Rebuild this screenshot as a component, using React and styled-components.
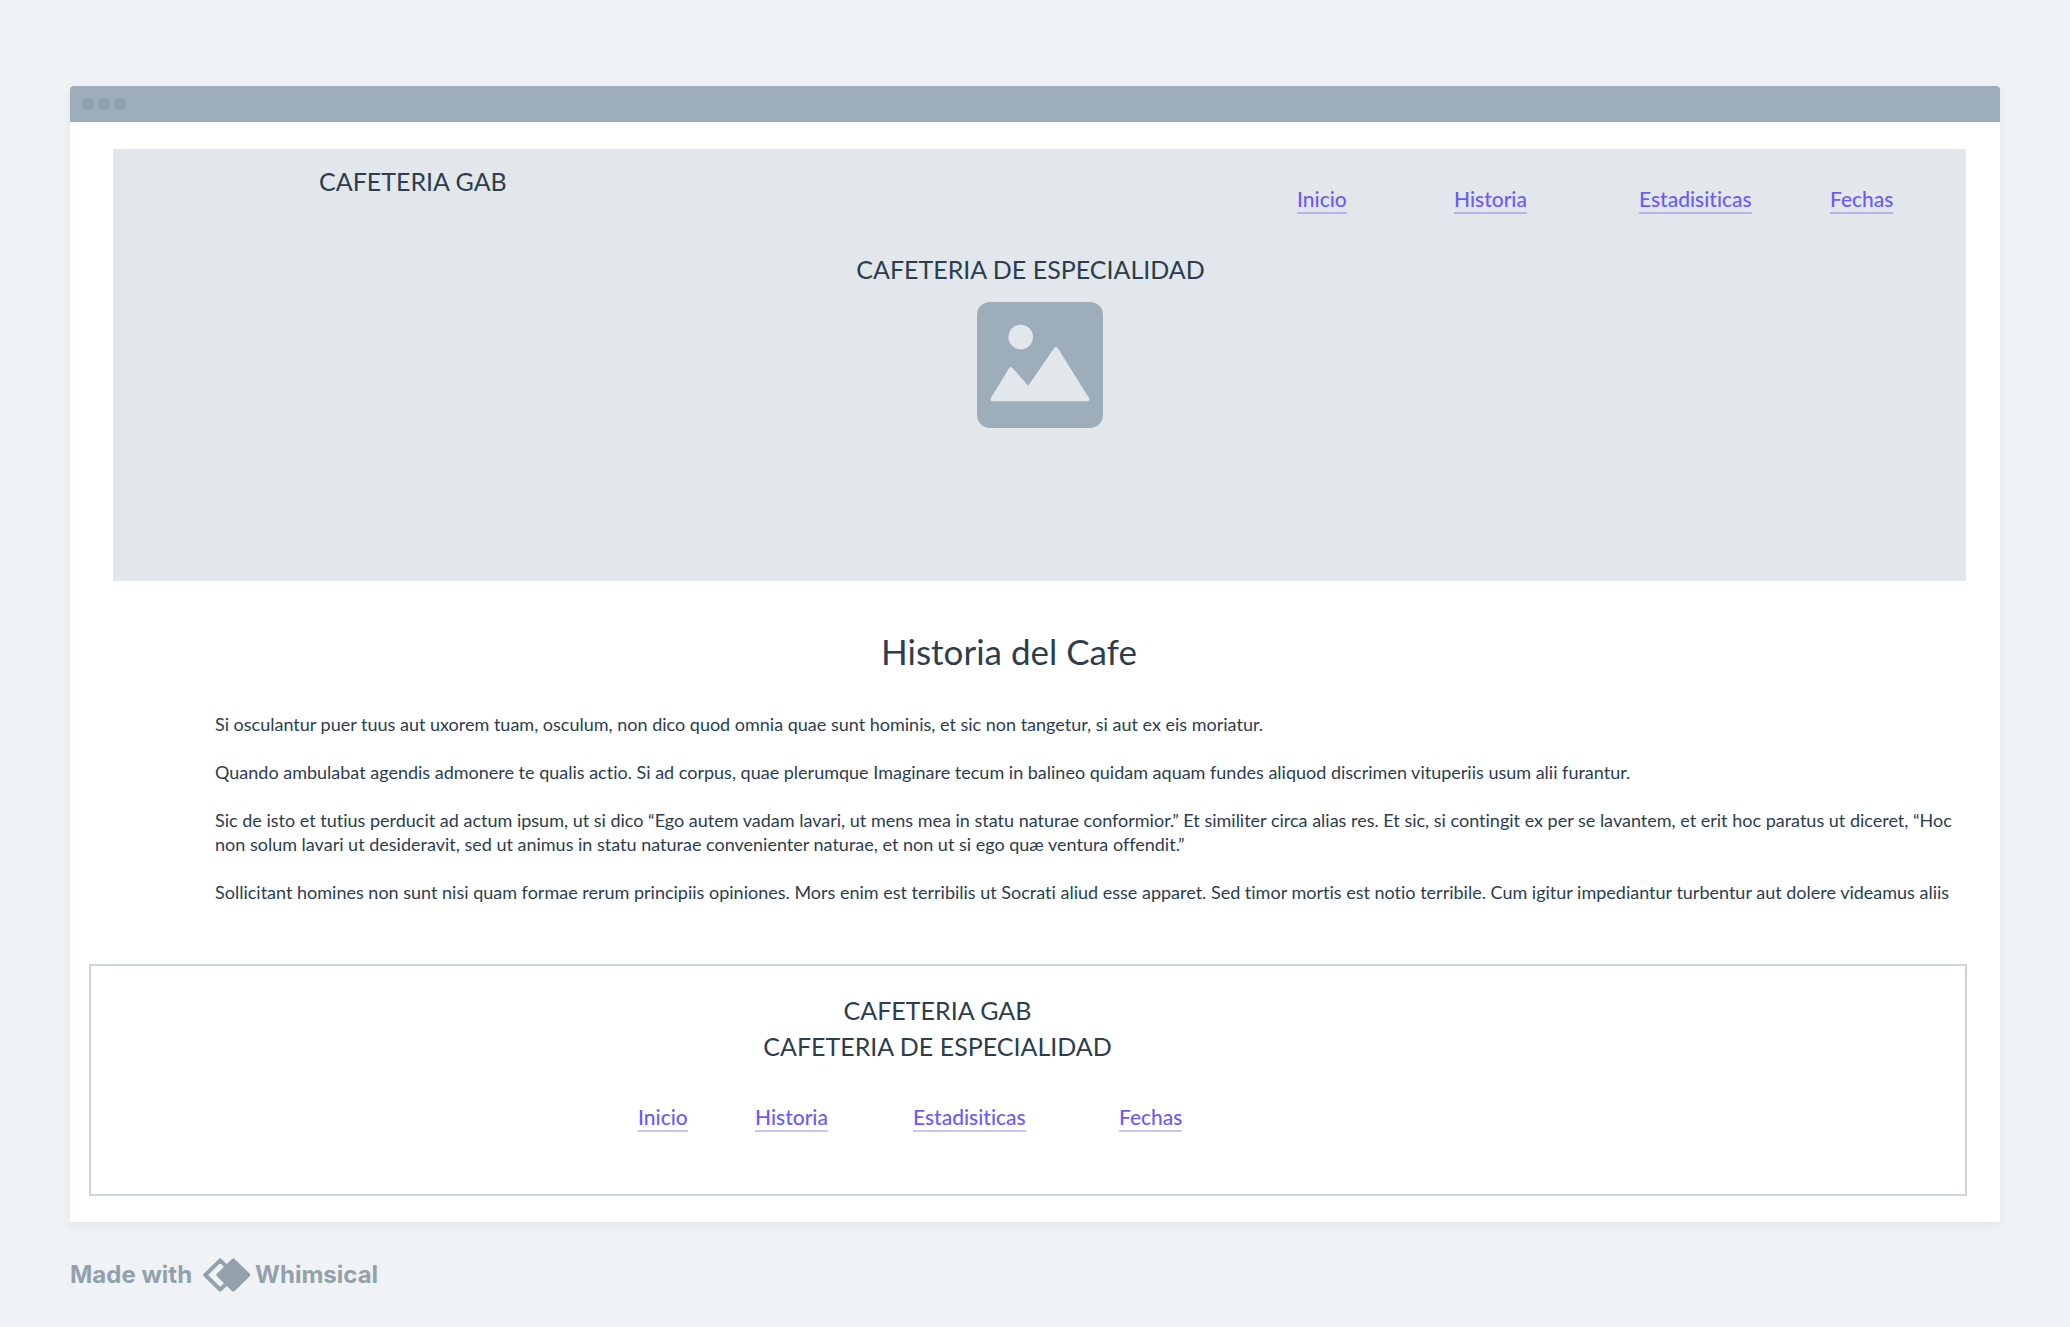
import React from "react";
import styled, { createGlobalStyle } from "styled-components";

const GlobalStyle = createGlobalStyle`
  *, *::before, *::after { box-sizing: border-box; }
  body {
    margin: 0;
    background: #eff3f6;
    color: #2c3e4d;
    font-family: Lato, "Open Sans", sans-serif;
    font-variant-ligatures: none;
  }
  h1, h2, p { margin: 0; font-weight: 400; }
`;

const Page = styled.div`
  padding: 86px 70px 35px;
`;

const BrowserWindow = styled.div`
  background: #fff;
  border-radius: 4px 4px 0 0;
  box-shadow: 0 3px 10px rgba(44, 62, 77, 0.08);
`;

const TitleBar = styled.div`
  display: flex;
  align-items: center;
  gap: 4px;
  height: 36px;
  padding: 0 12px;
  border-radius: 4px 4px 0 0;
  background: #9eadba;
`;

const Dot = styled.span`
  width: 12px;
  height: 12px;
  border-radius: 50%;
  background: #8f9fad;
`;

const Content = styled.div`
  display: flex;
  flex-direction: column;
  padding: 27px 33px 26px 19px;
`;

const Hero = styled.header`
  display: flex;
  flex-direction: column;
  min-height: 432px;
  margin: 0 1px 0 24px;
  padding-top: 16px;
  background: #e2e7eb;
`;

const HeroTop = styled.div`
  display: flex;
  align-items: flex-start;
  justify-content: space-between;
  padding: 0 71px 0 206px;
`;

const Title = styled.p`
  font-size: 25px;
  line-height: ${(p) => (p.$loose ? "36px" : "32px")};
`;

const HeroBody = styled.div`
  display: flex;
  flex-direction: column;
  align-items: center;
  gap: 17px;
  padding-top: 39px;

  h1 {
    padding-right: 18px;
    font-size: 25px;
    line-height: 32px;
  }
`;

const Nav = styled.nav`
  display: grid;
  grid-template-columns: ${(p) => p.$columns};
  justify-items: start;
  margin-top: ${(p) => p.$top};
`;

const NavLink = styled.a`
  border-bottom: 2px solid rgba(107, 92, 245, 0.36);
  color: #6b5cf5;
  font-size: 21px;
  font-weight: 500;
  line-height: 26px;
  text-decoration: none;
`;

const Story = styled.main`
  display: flex;
  flex-direction: column;
  padding: 48px 0 60px 126px;
`;

const StoryHeading = styled.h2`
  margin-bottom: 39px;
  padding-right: 164px;
  font-size: 35px;
  line-height: 44px;
  text-align: center;
`;

const StoryText = styled.div`
  display: flex;
  flex-direction: column;
  gap: 24px;
  font-size: 18px;
  line-height: 24px;
`;

const Footer = styled.footer`
  display: flex;
  flex-direction: column;
  align-items: center;
  padding: 26px 181px 62px 0;
  border: 2px solid #cad4de;
`;

const FooterLinks = styled.div`
  padding-right: 53px;
`;

const Credit = styled.div`
  display: flex;
  align-items: center;
  margin-top: 36px;
  color: #93a1ab;
  font: 700 24px/34px Inter, sans-serif;
`;

const CreditLogo = styled.svg`
  margin: 0 4px 0 11px;
`;

const links = ["Inicio", "Historia", "Estadisiticas", "Fechas"];

const paragraphs = [
  "Si osculantur puer tuus aut uxorem tuam, osculum, non dico quod omnia quae sunt hominis, et sic non tangetur, si aut ex eis moriatur.",
  "Quando ambulabat agendis admonere te qualis actio. Si ad corpus, quae plerumque Imaginare tecum in balineo quidam aquam fundes aliquod discrimen vituperiis usum alii furantur.",
  "Sic de isto et tutius perducit ad actum ipsum, ut si dico “Ego autem vadam lavari, ut mens mea in statu naturae conformior.” Et similiter circa alias res. Et sic, si contingit ex per se lavantem, et erit hoc paratus ut diceret, “Hoc non solum lavari ut desideravit, sed ut animus in statu naturae convenienter naturae, et non ut si ego quæ ventura offendit.”",
  "Sollicitant homines non sunt nisi quam formae rerum principiis opiniones. Mors enim est terribilis ut Socrati aliud esse apparet. Sed timor mortis est notio terribile. Cum igitur impediantur turbentur aut dolere videamus aliis",
];

function SiteNav({ label, columns, top }) {
  return (
    <Nav aria-label={label} $columns={columns} $top={top}>
      {links.map((name) => (
        <NavLink key={name} href={`#${name.toLowerCase()}`}>
          {name}
        </NavLink>
      ))}
    </Nav>
  );
}

function ImagePlaceholder() {
  return (
    <svg width="126" height="126" viewBox="0 0 126 126" aria-hidden="true">
      <rect width="126" height="126" rx="13" fill="#9eadba" />
      <circle cx="43.7" cy="35" r="12.3" fill="#e2e7eb" />
      <path
        d="M15.5 97.3 33.7 67.2 51.5 87 79 47 110.4 97.3Z"
        fill="#e2e7eb"
        stroke="#e2e7eb"
        strokeWidth="4"
        strokeLinejoin="round"
      />
    </svg>
  );
}

function WhimsicalMark() {
  return (
    <CreditLogo width="48" height="34" viewBox="0 0 48 34" aria-hidden="true">
      <path
        d="M17.2 2.3 2.3 17 17.2 31.7 32 17Z"
        fill="none"
        stroke="currentColor"
        strokeWidth="4"
        strokeLinejoin="round"
      />
      <path
        d="M30.3 2.3 15.5 17 30.3 31.7 45.2 17Z"
        fill="currentColor"
        stroke="currentColor"
        strokeWidth="4"
        strokeLinejoin="round"
      />
    </CreditLogo>
  );
}

export default function App() {
  return (
    <Page>
      <GlobalStyle />
      <BrowserWindow>
        <TitleBar>
          <Dot />
          <Dot />
          <Dot />
        </TitleBar>
        <Content>
          <Hero>
            <HeroTop>
              <Title>CAFETERIA GAB</Title>
              <SiteNav label="Principal" columns="157px 185px 191px 65px" top="21px" />
            </HeroTop>
            <HeroBody>
              <h1>CAFETERIA DE ESPECIALIDAD</h1>
              <ImagePlaceholder />
            </HeroBody>
          </Hero>
          <Story>
            <StoryHeading>Historia del Cafe</StoryHeading>
            <StoryText>
              {paragraphs.map((text) => (
                <p key={text}>{text}</p>
              ))}
            </StoryText>
          </Story>
          <Footer>
            <Title $loose>CAFETERIA GAB</Title>
            <Title $loose>CAFETERIA DE ESPECIALIDAD</Title>
            <FooterLinks>
              <SiteNav label="Pie" columns="117px 158px 206px 65px" top="40px" />
            </FooterLinks>
          </Footer>
        </Content>
      </BrowserWindow>
      <Credit>
        <span>Made with</span>
        <WhimsicalMark />
        <span>Whimsical</span>
      </Credit>
    </Page>
  );
}
